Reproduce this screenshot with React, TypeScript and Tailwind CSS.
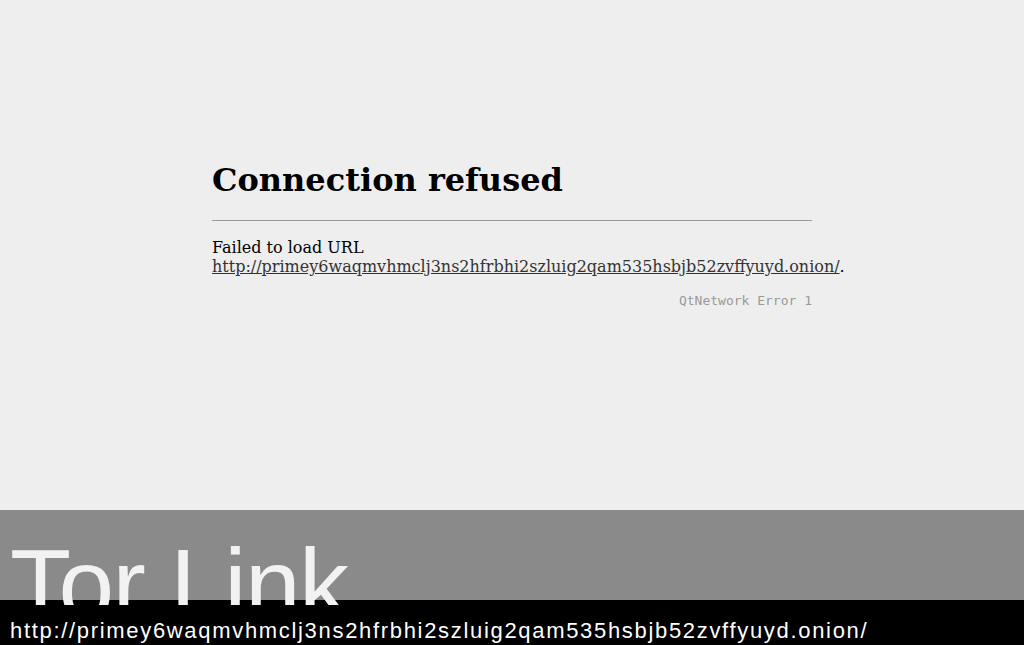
import React from "react";

const URL = "http://primey6waqmvhmclj3ns2hfrbhi2szluig2qam535hsbjb52zvffyuyd.onion/";

export default function App() {
  return (
    <div className="w-[1024px] h-[645px] overflow-hidden">
      <div className="h-[510px] bg-[#eeeeee]">
        <div className="w-[600px] mx-auto pt-[162px] text-black" style={{ fontFamily: '"DejaVu Serif", serif' }}>
          <h1 className="text-[32px] leading-[37px] font-bold m-0">Connection refused</h1>
          <hr className="mt-[21px] border-0 border-t border-[#999999]" />
          <div className="mt-[17px] text-[16px] leading-[19px]">
            <div>Failed to load URL</div>
            <div className="whitespace-nowrap">
              <a className="underline text-[#333333]">{URL}</a>.
            </div>
          </div>
          <div
            className="mt-[17px] text-right text-[13px] leading-[15px] text-[#999999]"
            style={{ fontFamily: '"DejaVu Sans Mono", monospace' }}
          >
            QtNetwork Error 1
          </div>
        </div>
      </div>
      <div className="h-[90px] bg-[#8a8a8a]" style={{ fontFamily: '"Liberation Sans", Arial, sans-serif' }}>
        <div className="h-[95px] overflow-hidden">
          <div className="pl-[10px] pt-[17px] text-[100px] leading-[115px] tracking-[-1.6px] text-[#f2f2f2] whitespace-nowrap">
            Tor Link
          </div>
        </div>
      </div>
      <div className="h-[45px] bg-black" style={{ fontFamily: '"Liberation Sans", Arial, sans-serif' }}>
        <div className="pl-[10px] pt-[18px] text-[22px] leading-[26px] tracking-[1.68px] text-white whitespace-nowrap">
          {URL}
        </div>
      </div>
    </div>
  );
}
